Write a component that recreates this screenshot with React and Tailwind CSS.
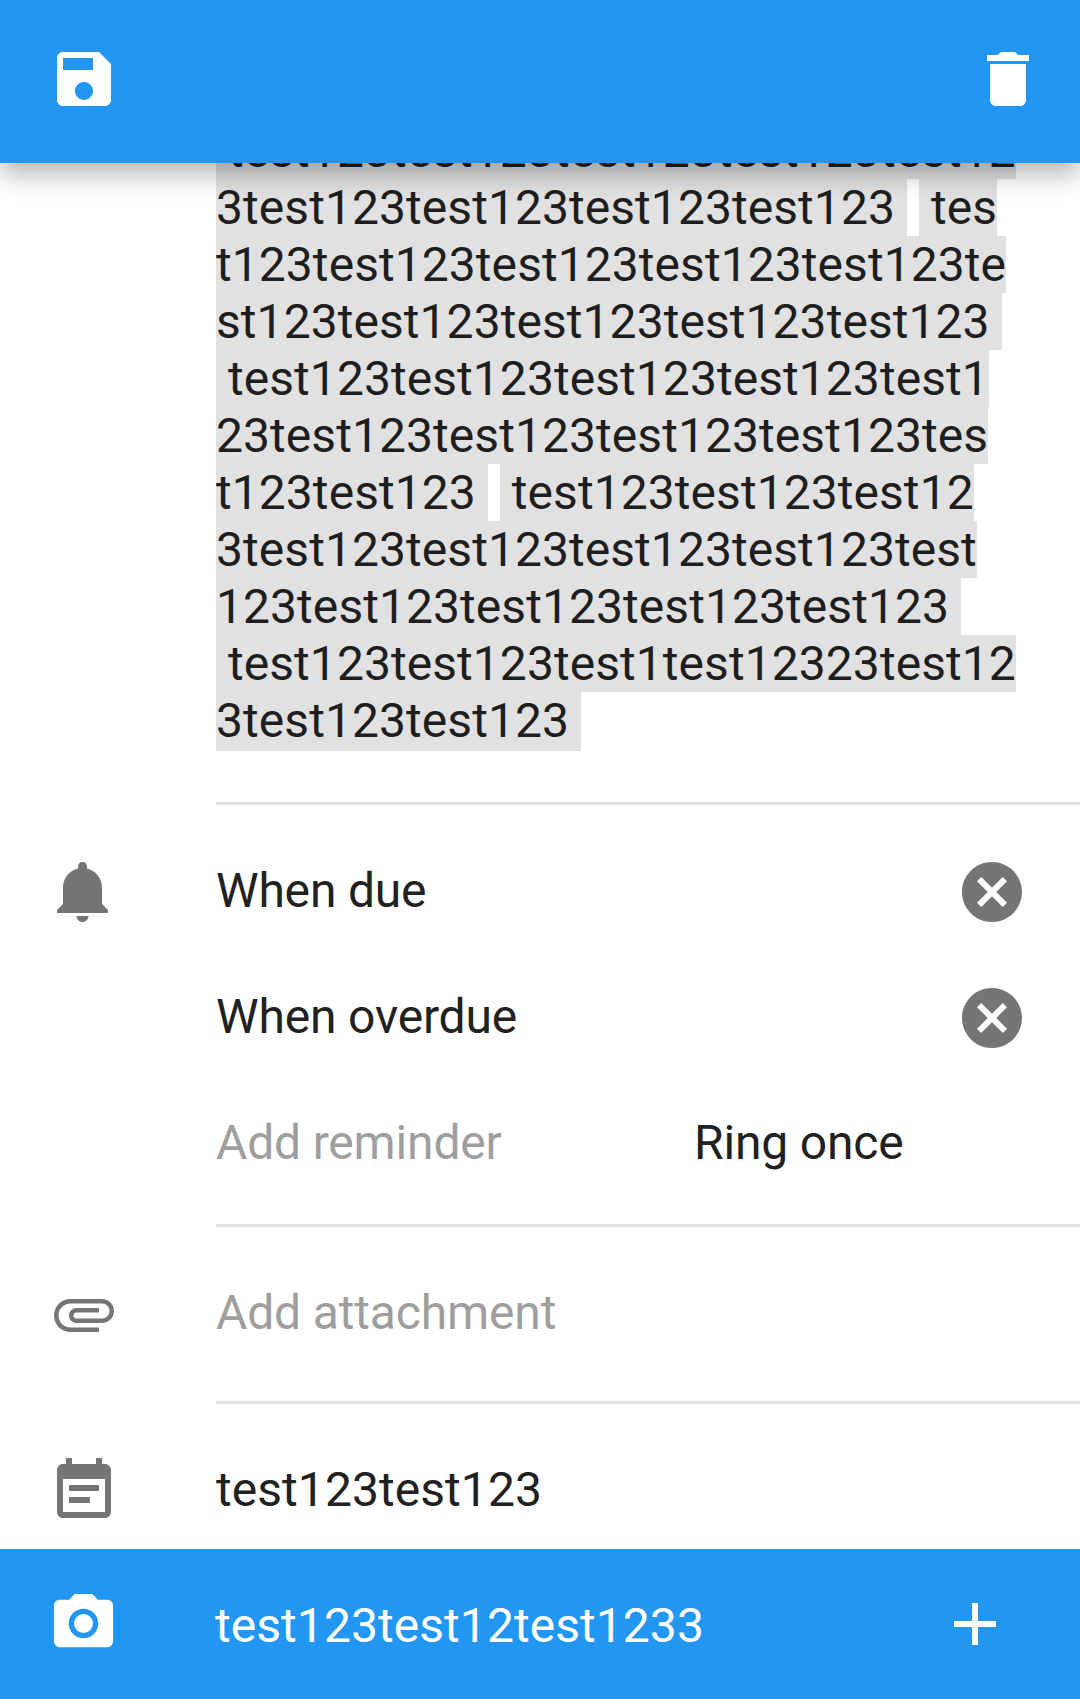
const ICONS = {
  save: 'M17 3H5c-1.11 0-2 .9-2 2v14c0 1.1.89 2 2 2h14c1.1 0 2-.9 2-2V7l-4-4zm-5 16c-1.66 0-3-1.34-3-3s1.34-3 3-3 3 1.34 3 3-1.34 3-3 3zm3-10H5V5h10v4z',
  trash: 'M6 19c0 1.1.9 2 2 2h8c1.1 0 2-.9 2-2V7H6v12zM19 4h-3.5c-.5 0-.6-1-1.6-1h-3.8c-1 0-1.1 1-1.6 1H5v2h14V4z',
  bell: 'M11.5 22c1.1 0 2-.9 2-2h-4c0 1.1.9 2 2 2zm6.5-6v-5.5c0-3.07-2.13-5.64-5-6.32V3.5c0-.83-.67-1.5-1.5-1.5S10 2.67 10 3.5v.68c-2.87.68-5 3.25-5 6.32V16l-2 2v1h17v-1l-2-2z',
  cancel: 'M12 2C6.47 2 2 6.47 2 12s4.47 10 10 10 10-4.47 10-10S17.53 2 12 2zm5 13.59L15.59 17 12 13.41 8.41 17 7 15.59 10.59 12 7 8.41 8.41 7 12 10.59 15.59 7 17 8.41 13.41 12 17 15.59z',
  attachment: 'M7.5 18C4.46 18 2 15.54 2 12.5S4.46 7 7.5 7H18c2.21 0 4 1.79 4 4s-1.79 4-4 4H9.5C8.12 15 7 13.88 7 12.5S8.12 10 9.5 10H17v1.5H9.5c-.55 0-1 .45-1 1s.45 1 1 1H18c1.38 0 2.5-1.12 2.5-2.5S19.38 8.5 18 8.5H7.5c-2.21 0-4 1.79-4 4s1.79 4 4 4H17V18H7.5z',
  note: 'M17 10H7v2h10v-2zm2-7h-1V1h-2v2H8V1H6v2H5c-1.11 0-1.99.9-1.99 2L3 19c0 1.1.89 2 2 2h14c1.1 0 2-.9 2-2V5c0-1.1-.9-2-2-2zm0 16H5V8h14v11zm-5-5H7v2h7v-2z',
  camera: 'M12 8.8a3.2 3.2 0 1 0 0 6.4 3.2 3.2 0 1 0 0-6.4zM9 2L7.17 4H4c-1.1 0-2 .9-2 2v12c0 1.1.9 2 2 2h16c1.1 0 2-.9 2-2V6c0-1.1-.9-2-2-2h-3.17L15 2H9zm3 15c-2.76 0-5-2.24-5-5s2.24-5 5-5 5 2.24 5 5-2.24 5-5 5z',
  plus: 'M19 13h-6v6h-2v-6H5v-2h6V5h2v6h6v2z',
};

function Icon({ name, className = 'size-[72px]' }) {
  return (
    <svg viewBox="0 0 24 24" fill="currentColor" className={`shrink-0 ${className}`} aria-hidden="true">
      <path d={ICONS[name]} />
    </svg>
  );
}

// Each line is a list of highlighted segments, separated by a plain space.
const NOTE_LINES = [
  [' test123test123test123test123test12'],
  ['3test123test123test123test123 ', ' tes'],
  ['t123test123test123test123test123te'],
  ['st123test123test123test123test123 '],
  [' test123test123test123test123test1'],
  ['23test123test123test123test123tes'],
  ['t123test123 ', ' test123test123test12'],
  ['3test123test123test123test123test'],
  ['123test123test123test123test123 '],
  [' test123test123test1test12323test12'],
  ['3test123test123 '],
];

function Row({ icon, className, children }) {
  return (
    <div className={`flex items-center pl-12 ${className}`}>
      <div className="w-[168px] shrink-0 text-[#757575]">{icon && <Icon name={icon} />}</div>
      {children}
    </div>
  );
}

function Label({ className = '-mt-[3px] tracking-[-0.17px]', children }) {
  return <span className={`whitespace-nowrap ${className}`}>{children}</span>;
}

function Divider() {
  return <div className="ml-[216px] h-[3px] shrink-0 bg-[#e0e0e0]" />;
}

export default function App() {
  return (
    <div className="flex h-[1699px] w-[1080px] flex-col overflow-hidden bg-white font-['Roboto',sans-serif] text-[48px] leading-[57px] text-[#212121]">
      <header className="z-10 flex h-[163px] shrink-0 items-start justify-between bg-[#2196f3] pt-[43px] pr-9 pl-12 text-white shadow-[0_12px_24px_rgba(0,0,0,0.28)]">
        <button aria-label="Save"><Icon name="save" /></button>
        <button aria-label="Delete"><Icon name="trash" /></button>
      </header>

      <main className="flex h-[1386px] shrink-0 flex-col overflow-hidden">
        <div className="-mt-[41px] mb-[51px] ml-[216px] shrink-0 tracking-[0.06px] text-[#1e1e1e]">
          {NOTE_LINES.map((segments, i) => (
            <div key={i} className="flex h-[57px] gap-3 last:h-[59px]">
              {segments.map((text, j) => (
                <span key={j} className="whitespace-pre bg-[#e1e1e1]">{text}</span>
              ))}
            </div>
          ))}
        </div>
        <Divider />

        <section className="h-[419px] shrink-0 pt-6">
          <Row icon="bell" className="h-[126px]">
            <Label className="-mt-[3px] flex-1 tracking-[-0.2px]">When due</Label>
            <button aria-label="Remove" className="mr-[52px] text-[#757575]"><Icon name="cancel" /></button>
          </Row>
          <Row className="h-[126px]">
            <Label className="-mt-[3px] flex-1 tracking-[-0.17px]">When overdue</Label>
            <button aria-label="Remove" className="mr-[52px] text-[#757575]"><Icon name="cancel" /></button>
          </Row>
          <Row className="h-[126px]">
            <Label className="-mt-[3px] w-[478px] tracking-[-0.17px] text-[#9e9e9e]">Add reminder</Label>
            <Label>Ring once</Label>
          </Row>
        </section>
        <Divider />

        <Row icon="attachment" className="h-[174px] shrink-0">
          <Label className="-mt-[3px] tracking-[-0.15px] text-[#9e9e9e]">Add attachment</Label>
        </Row>
        <Divider />

        <Row icon="note" className="h-[174px] shrink-0">
          <Label className="-mt-[3px] tracking-[0.06px]">test123test123</Label>
        </Row>
      </main>

      <footer className="flex h-[150px] shrink-0 items-center bg-[#2196f3] pl-12 text-white">
        <div className="-mt-px w-[167px] shrink-0"><Icon name="camera" className="size-[71px]" /></div>
        <Label className="mt-[2px] flex-1 tracking-[0.06px]">test123test12test1233</Label>
        <button aria-label="Add" className="mr-[69px]"><Icon name="plus" /></button>
      </footer>
    </div>
  );
}
